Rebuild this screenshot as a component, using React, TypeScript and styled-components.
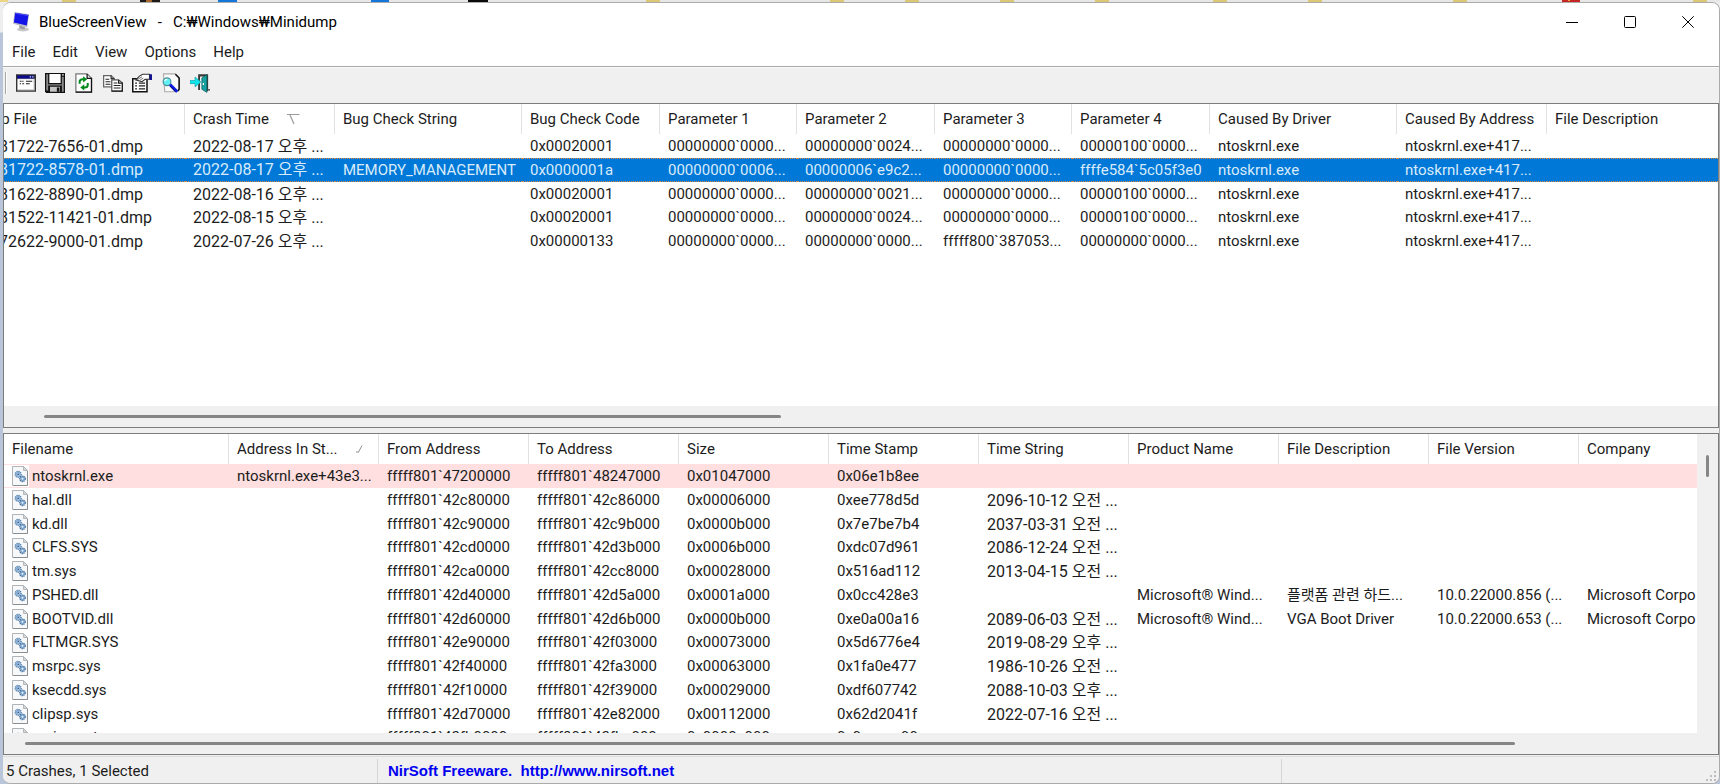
import React from 'react';
import styled, { createGlobalStyle, css } from 'styled-components';

const GlobalStyle = createGlobalStyle`
  *, *::before, *::after { box-sizing: border-box; }
  body { margin: 0; background: #b9c5d9; }
  button { border: 0; padding: 0; margin: 0; background: none; color: inherit; font: inherit; }
`;

const Desktop = styled.div`
  display: flex;
  flex-direction: column;
  height: 100vh;
  min-height: 560px;
  padding-left: 3px;
  background: linear-gradient(#eeeeee 32px, #b9c5d9 33px);
  font-family: Roboto, "Noto Sans CJK KR", sans-serif;
  font-size: 15px;
  line-height: 24px;
  color: #1c1c1c;
`;

const Strip = styled.div`
  flex: none;
  height: 2px;
  margin-left: -3px;
  overflow: hidden;
  background: #e7e7e7;

  svg { display: block; }
`;

const Window = styled.main`
  flex: 1;
  min-height: 0;
  display: flex;
  flex-direction: column;
  overflow: hidden;
  border: 1px solid #ababab;
  border-left: 0;
  border-radius: 8px;
  background: #f0f0f0;
`;

const TitleBar = styled.header`
  flex: none;
  display: flex;
  align-items: center;
  height: 38px;
  padding: 0 2px 0 10px;
  background: #fff;
  color: #000;
`;

const Title = styled.h1`
  flex: 1;
  margin: 0 0 0 8px;
  font-size: 15px;
  font-weight: 400;
  white-space: pre;
`;

const CaptionButton = styled.button`
  display: flex;
  align-items: center;
  justify-content: center;
  width: 58px;
  height: 38px;
`;

const MenuBar = styled.nav`
  flex: none;
  display: flex;
  align-items: flex-start;
  gap: 17px;
  height: 25px;
  padding-left: 9px;
  background: #fff;
  line-height: 23px;
`;

const ToolBar = styled.div`
  flex: none;
  display: flex;
  align-items: center;
  gap: 1px;
  height: 37px;
  padding: 0 2px 4px;
  border-top: 1px solid #a9a9a9;
  box-shadow: inset 0 1px 0 #fafafa;
`;

const Grip = styled.span`
  width: 2px;
  height: 22px;
  margin-right: 4px;
  border-left: 1px solid #a6a6a6;
  border-right: 1px solid #fff;
`;

const ToolButton = styled.button`
  display: flex;
  align-items: center;
  justify-content: center;
  width: 28px;
  height: 28px;
`;

const Panes = styled.div`
  flex: 1;
  min-height: 0;
  display: grid;
  grid-template-columns: minmax(0, 1fr);
  grid-template-rows: minmax(0, 325fr) minmax(0, 322fr);
  row-gap: 5px;
`;

const Pane = styled.section<{ $vertical?: boolean }>`
  display: grid;
  grid-template-columns: minmax(0, 1fr) ${(p) => (p.$vertical ? '21px' : '')};
  grid-template-rows: minmax(0, 1fr) 21px;
  border: 1px solid #7c7c7c;
  background: #f0f0f0;
`;

const Viewport = styled.div`
  overflow: hidden;
  background: #fff;
`;

const List = styled.table<{ $scrolled: number }>`
  table-layout: fixed;
  border-collapse: separate;
  border-spacing: 0;
  width: calc(100% + ${(p) => p.$scrolled}px);
  margin-left: -${(p) => p.$scrolled}px;
`;

const Col = styled.col<{ $w?: number }>`
  width: ${(p) => (p.$w ? `${p.$w}px` : 'auto')};
`;

const Head = styled.th`
  height: 30px;
  padding: 0 8px;
  border-right: 1px solid #e2e2e2;
  font-weight: 400;
  text-align: left;
  white-space: nowrap;
  overflow: hidden;

  &:last-child { border-right: 0; }
`;

const HeadLabel = styled.div`
  display: flex;
  align-items: center;
  gap: 18px;
`;

type Mark = 'selected' | 'found' | undefined;

const Cell = styled.td<{ $large?: boolean }>`
  height: inherit;
  padding: 0 0 0 8px;
  font-size: ${(p) => (p.$large ? 16 : 15)}px;
  line-height: 23px;
  white-space: nowrap;
  overflow: hidden;

  &:first-child { padding-left: 0; }
`;

const Row = styled.tr<{ $mark?: Mark }>`
  height: 24px;

  &:nth-child(4n) { height: 23px; }

  ${(p) => p.$mark === 'found' && css`background: #ffdfdf;`}
  ${(p) => p.$mark === 'selected' && css`
    background: #0078d7;
    color: #d9ebfa;

    ${Cell} {
      border-top: 1px dotted #d58a45;
      border-bottom: 1px dotted #d58a45;
      line-height: 22px;
    }
  `}
`;

const FileLabel = styled.div`
  display: flex;
  align-items: center;
  gap: 3px;
`;

const IconSlot = styled.span`
  flex: none;
  width: 25px;
  height: 22px;
  padding: 1px 0 0 8px;
  background: #fff;

  svg { display: block; }
`;

const HTrack = styled.div`
  display: flex;
  align-items: center;
`;

const HThumb = styled.div<{ $start: number; $size: number }>`
  width: ${(p) => p.$size}%;
  height: 3px;
  margin: 0 0 1px ${(p) => p.$start}px;
  border-radius: 2px;
  background: #868686;
`;

const VTrack = styled.div`
  display: flex;
  justify-content: center;
  padding-top: 21px;
`;

const VThumb = styled.div`
  width: 3px;
  height: 22px;
  border-radius: 2px;
  background: #868686;
`;

const StatusBar = styled.footer`
  flex: none;
  display: grid;
  grid-template-columns: 375px 904px minmax(0, 1fr);
  height: 28px;
  padding-top: 4px;
  background: linear-gradient(#f0f0f0 1px, #dcdcdc 1px, #dcdcdc 2px, #f0f0f0 2px);
`;

const StatusCell = styled.div`
  display: flex;
  align-items: center;
  justify-content: space-between;
  padding-left: 3px;
  border-right: 1px solid #d5d5d5;

  &:last-child {
    justify-content: flex-end;
    align-items: flex-end;
    padding: 0 2px 1px 0;
    border: 0;
  }
`;

const SiteLink = styled.a`
  margin-left: 7px;
  font: bold 15px/22px "Liberation Sans", sans-serif;
  color: #0000f0;
  text-decoration: none;
  white-space: pre;
`;

const yellow = [62, 646, 830, 905, 1000, 1095, 1213, 1308, 1453, 1693];

const DesktopStrip = () => (
  <Strip>
    <svg width="1720" height="2" shapeRendering="crispEdges" aria-hidden="true">
      <rect x="0" width="8" height="2" fill="#ecd583" />
      {yellow.map((x) => <rect key={x} x={x} width="14" height="2" fill="#dcc774" />)}
      <rect x="140" width="20" height="2" fill="#1d1a18" />
      <rect x="146" y="0" width="6" height="2" fill="#a8672c" />
      <rect x="468" width="20" height="2" fill="#0a0a0a" />
      <rect x="218" width="19" height="2" fill="#1277d8" />
      <rect x="371" width="18" height="2" fill="#1277d8" />
      <rect x="1562" width="18" height="2" fill="#c62525" />
      <rect x="1568" width="2" height="1" fill="#e8b13c" />
    </svg>
  </Strip>
);

const Logo = () => (
  <svg width="18" height="20" viewBox="0 0 18 20" aria-hidden="true">
    <ellipse cx="10" cy="17.4" rx="6" ry="2" fill="#c9c9c9" />
    <path d="M6 13l6 2-.5 2.500-5-1z" fill="#9c9c9c" />
    <path d="M1.500 0L16 2.200 14.200 15.500 0 11.800z" fill="#bdbdc9" />
    <path d="M2.200.8L15.500 2.900 13.800 13.600.9 10.500z" fill="#1414e6" />
    <path d="M2.200.8L15.500 2.900 15.300 4 2 1.800z" fill="#4a4af5" />
  </svg>
);

const FileIcon = () => (
  <svg width="16" height="20" viewBox="0 0 16 20" aria-hidden="true">
    <path d="M.5.5h11l4 4v15H.5z" fill="#f7f8f9" stroke="#b0b3b5" />
    <path d="M15.500 5v14.500H1" fill="none" stroke="#8b8f92" />
    <path d="M11.500.5v4h4z" fill="#d4d7d9" stroke="#b4b7ba" />
    <circle cx="6.200" cy="8.300" r="3" fill="#c5daf0" stroke="#5580a8" strokeWidth="1.300" strokeDasharray="1.300 .7" />
    <circle cx="6.200" cy="8.300" r="2" fill="#b4d0ec" stroke="#6d9bcb" strokeWidth=".8" />
    <circle cx="6.200" cy="8.300" r=".8" fill="#1f4366" />
    <circle cx="10.500" cy="12.800" r="2.700" fill="#c5daf0" stroke="#3f6b97" strokeWidth="1.300" strokeDasharray="1.300 .6" />
    <circle cx="10.500" cy="12.800" r="1.700" fill="#a8c9ea" stroke="#5a8cc0" strokeWidth=".8" />
    <circle cx="10.500" cy="12.800" r=".8" fill="#f4f9fe" />
  </svg>
);

const Art = ({ children }: { children: React.ReactNode }) => (
  <svg width="20" height="20" viewBox="0 0 16 16" aria-hidden="true">{children}</svg>
);

const tools: { name: string; art: React.ReactNode }[] = [
  {
    name: 'Advanced options',
    art: (
      <>
        <path d="M0 1h16v14H0z" fill="#333" />
        <path d="M1 2h13.500v2.500H1z" fill="#0b0b8c" />
        <path d="M11 2.600h1v1h-1zM13 2.600h1v1h-1z" fill="#e6e6e6" />
        <path d="M1 4.500h14V14H1z" fill="#c8c8c8" />
        <path d="M1.500 5h12.500v8H1.500z" fill="#fff" />
        <path d="M3 6.600h1.500M5 6.600h1M8 6.600h5M3 8.600h1M5 8.600h1.500M8 8.600h3" stroke="#222" strokeWidth=".9" fill="none" />
      </>
    ),
  },
  {
    name: 'Save selected items',
    art: (
      <>
        <path d="M0 0h16v16H1l-1-1z" fill="#111" />
        <path d="M1 1h1.500v13H1zM13.500 3H15v12h-1.500z" fill="#8b8b8b" />
        <path d="M3.500.8h9V8h-9z" fill="#fff" />
        <path d="M2.500 9h11v1h-11z" fill="#8b8b8b" />
        <path d="M4 11h8v4H4z" fill="#c4c4c4" />
        <path d="M9.500 11.500h2V15h-2z" fill="#111" />
        <path d="M13.700 1h1.300v1h-1.300z" fill="#fff" />
      </>
    ),
  },
  {
    name: 'Refresh',
    art: (
      <>
        <path d="M1.500.7h9l3.500 3.500v11H1.500z" fill="#fff" stroke="#777" />
        <path d="M10.500.7v3.500H14v11H1.500" fill="none" stroke="#111" />
        <path d="M4.500 8.500V7q0-2 2.500-2h.8" fill="none" stroke="#008a1c" strokeWidth="1.600" />
        <path d="M7.300 2.500l3.200 2.500-3.200 2.500z" fill="#008a1c" />
        <path d="M11 8v1.500q0 2-2.500 2h-.8" fill="none" stroke="#008a1c" strokeWidth="1.600" />
        <path d="M8.200 9l-3.200 2.500 3.200 2.500z" fill="#008a1c" />
      </>
    ),
  },
  {
    name: 'Copy selected items',
    art: (
      <>
        <path d="M.5 2h6L9 4.500V11H.5z" fill="#fff" stroke="#666" />
        <path d="M6.500 2v2.500H9" fill="none" stroke="#333" />
        <path d="M2 5h3M2 7h4M2 9h4" stroke="#222" strokeWidth=".9" />
        <path d="M7 5.500h5.500l3 2.500v6.500H7z" fill="#fff" stroke="#555" />
        <path d="M12.500 5.500V8h3v6.500H7" fill="none" stroke="#222" />
        <path d="M8.500 8h3M8.500 10h5.500M8.500 12h5.500" stroke="#222" strokeWidth=".9" />
      </>
    ),
  },
  {
    name: 'Properties',
    art: (
      <>
        <path d="M.6 4.500h11.400V15H.6z" fill="#fff" stroke="#111" strokeWidth="1.200" />
        <path d="M2.500 8h1.500M5.500 8h5M2.500 10.300h1.500M5.500 10.300h5M2.500 12.600h1.500M5.500 12.600h5" stroke="#222" />
        <path d="M3 5.500L6 2.500 8.500 1H14v4H10.500L8 7z" fill="#fff" stroke="#333" strokeWidth=".9" />
        <path d="M4 5.500l4-2.500M5.500 6.500l3.500-2.500" stroke="#777" strokeWidth=".8" />
        <path d="M14 1h2v4.500h-2z" fill="#12128f" />
      </>
    ),
  },
  {
    name: 'Find',
    art: (
      <>
        <path d="M2 .7h9.500L14.500 3.500V13L12.500 15H3z" fill="#fafafa" stroke="#aaa" strokeWidth=".9" />
        <path d="M11.500 1L14.500 4v9l-1 1.500" fill="none" stroke="#111" strokeWidth="1.200" />
        <circle cx="4.800" cy="7" r="3.100" fill="#5ff0f5" stroke="#4b8f96" strokeWidth=".9" />
        <path d="M3 6.500q.5-1.500 2-1.500" fill="none" stroke="#fff" />
        <path d="M7.200 9.300L13 15" stroke="#0a1be0" strokeWidth="2.400" />
        <path d="M7.400 10.600L11.500 15" stroke="#05056b" strokeWidth=".8" />
      </>
    ),
  },
  {
    name: 'Exit',
    art: (
      <>
        <path d="M6.500 1h8v13.500h-2V3H8v10.500H6.500z" fill="#3a3a3a" />
        <path d="M8 3h3v10.500H8z" fill="#efefef" />
        <path d="M9.500 4L13.500 1.500v14L9.500 13z" fill="#18a3a3" stroke="#0a5f60" strokeWidth=".6" />
        <path d="M14.500 13.500h1.500" stroke="#333" />
        <path d="M10.700 8v1.500" stroke="#fff" />
        <path d="M0 6h4V3.200L8.700 7.200 4 11.200V8.500H0z" fill="#10e5ee" stroke="#129aa3" strokeWidth=".5" />
      </>
    ),
  },
];

const SortDown = () => (
  <svg width="13" height="12" viewBox="0 0 13 12" fill="none" stroke="#9a9a9a" aria-label="sorted descending">
    <path d="M0 1.500h12.500" />
    <path d="M3 2L7 11" strokeWidth="1.200" />
  </svg>
);

const SortUp = () => (
  <svg width="7" height="8" viewBox="0 0 7 8" fill="none" stroke="#8f8f8f" aria-label="sorted ascending">
    <path d="M6 .5L2.500 7M0 7h3" />
  </svg>
);

interface Column { label: string; w?: number; sort?: React.ReactNode; large?: boolean }

const crashColumns: Column[] = [
  { label: 'Dump File', w: 223, large: true },
  { label: 'Crash Time', w: 150, sort: <SortDown />, large: true },
  { label: 'Bug Check String', w: 187 },
  { label: 'Bug Check Code', w: 138 },
  { label: 'Parameter 1', w: 137 },
  { label: 'Parameter 2', w: 138 },
  { label: 'Parameter 3', w: 137 },
  { label: 'Parameter 4', w: 138 },
  { label: 'Caused By Driver', w: 187 },
  { label: 'Caused By Address', w: 150 },
  { label: 'File Description' },
];

const crashes: string[][] = [
  ['081722-7656-01.dmp', '2022-08-17 오후 ...', '', '0x00020001', '00000000`0000...', '00000000`0024...', '00000000`0000...', '00000100`0000...', 'ntoskrnl.exe', 'ntoskrnl.exe+417...', ''],
  ['081722-8578-01.dmp', '2022-08-17 오후 ...', 'MEMORY_MANAGEMENT', '0x0000001a', '00000000`0006...', '00000006`e9c2...', '00000000`0000...', 'ffffe584`5c05f3e0', 'ntoskrnl.exe', 'ntoskrnl.exe+417...', ''],
  ['081622-8890-01.dmp', '2022-08-16 오후 ...', '', '0x00020001', '00000000`0000...', '00000000`0021...', '00000000`0000...', '00000100`0000...', 'ntoskrnl.exe', 'ntoskrnl.exe+417...', ''],
  ['081522-11421-01.dmp', '2022-08-15 오후 ...', '', '0x00020001', '00000000`0000...', '00000000`0024...', '00000000`0000...', '00000100`0000...', 'ntoskrnl.exe', 'ntoskrnl.exe+417...', ''],
  ['072622-9000-01.dmp', '2022-07-26 오후 ...', '', '0x00000133', '00000000`0000...', '00000000`0000...', 'fffff800`387053...', '00000000`0000...', 'ntoskrnl.exe', 'ntoskrnl.exe+417...', ''],
];

const driverColumns: Column[] = [
  { label: 'Filename', w: 225 },
  { label: 'Address In St...', w: 150, sort: <SortUp /> },
  { label: 'From Address', w: 150 },
  { label: 'To Address', w: 150 },
  { label: 'Size', w: 150 },
  { label: 'Time Stamp', w: 150 },
  { label: 'Time String', w: 150, large: true },
  { label: 'Product Name', w: 150 },
  { label: 'File Description', w: 150 },
  { label: 'File Version', w: 150 },
  { label: 'Company' },
];

const drivers: string[][] = [
  ['ntoskrnl.exe', 'ntoskrnl.exe+43e3...', 'fffff801`47200000', 'fffff801`48247000', '0x01047000', '0x06e1b8ee', '', '', '', '', ''],
  ['hal.dll', '', 'fffff801`42c80000', 'fffff801`42c86000', '0x00006000', '0xee778d5d', '2096-10-12 오전 ...', '', '', '', ''],
  ['kd.dll', '', 'fffff801`42c90000', 'fffff801`42c9b000', '0x0000b000', '0x7e7be7b4', '2037-03-31 오전 ...', '', '', '', ''],
  ['CLFS.SYS', '', 'fffff801`42cd0000', 'fffff801`42d3b000', '0x0006b000', '0xdc07d961', '2086-12-24 오전 ...', '', '', '', ''],
  ['tm.sys', '', 'fffff801`42ca0000', 'fffff801`42cc8000', '0x00028000', '0x516ad112', '2013-04-15 오전 ...', '', '', '', ''],
  ['PSHED.dll', '', 'fffff801`42d40000', 'fffff801`42d5a000', '0x0001a000', '0x0cc428e3', '', 'Microsoft® Wind...', '플랫폼 관련 하드...', '10.0.22000.856 (...', 'Microsoft Corpo'],
  ['BOOTVID.dll', '', 'fffff801`42d60000', 'fffff801`42d6b000', '0x0000b000', '0xe0a00a16', '2089-06-03 오전 ...', 'Microsoft® Wind...', 'VGA Boot Driver', '10.0.22000.653 (...', 'Microsoft Corpo'],
  ['FLTMGR.SYS', '', 'fffff801`42e90000', 'fffff801`42f03000', '0x00073000', '0x5d6776e4', '2019-08-29 오후 ...', '', '', '', ''],
  ['msrpc.sys', '', 'fffff801`42f40000', 'fffff801`42fa3000', '0x00063000', '0x1fa0e477', '1986-10-26 오전 ...', '', '', '', ''],
  ['ksecdd.sys', '', 'fffff801`42f10000', 'fffff801`42f39000', '0x00029000', '0xdf607742', '2088-10-03 오후 ...', '', '', '', ''],
  ['clipsp.sys', '', 'fffff801`42d70000', 'fffff801`42e82000', '0x00112000', '0x62d2041f', '2022-07-16 오전 ...', '', '', '', ''],
  ['cmimcext.sys', '', 'fffff801`42fb0000', 'fffff801`42fbe000', '0x0000e000', '0x9eacce90', '', '', '', '', ''],
];

interface ReportProps {
  name: string;
  columns: Column[];
  rows: string[][];
  scrolled?: number;
  marked: number;
  mark: Mark;
}

const Report = ({ name, columns, rows, scrolled = 0, marked, mark }: ReportProps) => (
  <Viewport>
    <List $scrolled={scrolled} aria-label={name}>
      <colgroup>{columns.map((c) => <Col key={c.label} $w={c.w} />)}</colgroup>
      <thead>
        <tr>
          {columns.map((c) => (
            <Head key={c.label} scope="col">
              <HeadLabel>{c.label}{c.sort}</HeadLabel>
            </Head>
          ))}
        </tr>
      </thead>
      <tbody>
        {rows.map((cells, r) => (
          <Row key={cells[0]} $mark={r === marked ? mark : undefined} aria-selected={r === marked}>
            {cells.map((text, i) => (
              <Cell key={columns[i].label} $large={columns[i].large}>
                {i === 0 ? <FileLabel><IconSlot><FileIcon /></IconSlot>{text}</FileLabel> : text}
              </Cell>
            ))}
          </Row>
        ))}
      </tbody>
    </List>
  </Viewport>
);

export default function App() {
  return (
    <>
      <GlobalStyle />
      <Desktop>
        <DesktopStrip />
        <Window>
          <TitleBar>
            <Logo />
            <Title>{'BlueScreenView   -   C:₩Windows₩Minidump'}</Title>
            <CaptionButton aria-label="Minimize">
              <svg width="12" height="12" stroke="#000"><path d="M0 6.500h12" /></svg>
            </CaptionButton>
            <CaptionButton aria-label="Maximize">
              <svg width="12" height="12" fill="none" stroke="#000"><rect x=".5" y=".5" width="11" height="11" rx="1" /></svg>
            </CaptionButton>
            <CaptionButton aria-label="Close">
              <svg width="12" height="12" stroke="#000"><path d="M.3.3l11.400 11.400M11.700.3L.3 11.700" /></svg>
            </CaptionButton>
          </TitleBar>
          <MenuBar>
            {['File', 'Edit', 'View', 'Options', 'Help'].map((m) => <button key={m}>{m}</button>)}
          </MenuBar>
          <ToolBar role="toolbar" aria-label="Main">
            <Grip />
            {tools.map((t) => (
              <ToolButton key={t.name} aria-label={t.name}><Art>{t.art}</Art></ToolButton>
            ))}
          </ToolBar>
          <Panes>
            <Pane>
              <Report name="Crashes" columns={crashColumns} rows={crashes} scrolled={42} marked={1} mark="selected" />
              <HTrack><HThumb $start={40} $size={43} /></HTrack>
            </Pane>
            <Pane $vertical>
              <Report name="Drivers" columns={driverColumns} rows={drivers} marked={0} mark="found" />
              <VTrack><VThumb /></VTrack>
              <HTrack><HThumb $start={21} $size={88} /></HTrack>
            </Pane>
          </Panes>
          <StatusBar>
            <StatusCell>5 Crashes, 1 Selected</StatusCell>
            <StatusCell>
              <SiteLink href="http://www.nirsoft.net">{'NirSoft Freeware.  http://www.nirsoft.net'}</SiteLink>
            </StatusCell>
            <StatusCell>
              <svg width="11" height="11" fill="#bdbdbd" aria-hidden="true">
                <path d="M8 0h2v2H8zM8 4h2v2H8zM8 8h2v2H8zM4 4h2v2H4zM4 8h2v2H4zM0 8h2v2H0z" />
              </svg>
            </StatusCell>
          </StatusBar>
        </Window>
      </Desktop>
    </>
  );
}
